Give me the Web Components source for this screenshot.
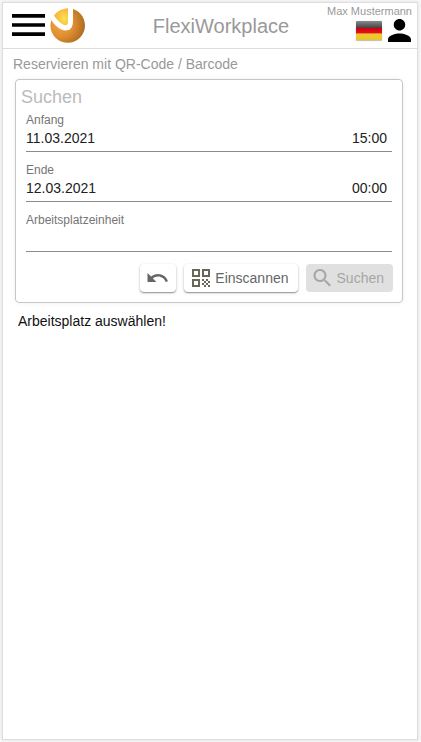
<!DOCTYPE html>
<html lang="de"><head><meta charset="utf-8"><title>FlexiWorkplace</title>
<style>
html,body{margin:0;height:100%}
body{background:#f7f7f7;font-family:"Liberation Sans",Arial,sans-serif}
</style></head><body>
<flexi-app></flexi-app>
<script>
const define=(name,html)=>customElements.define(name,class extends HTMLElement{
  constructor(){super();this.attachShadow({mode:'open'}).innerHTML=html;}
});
define('flexi-logo',`<style>:host{display:block;width:36px;height:36px}svg{display:block}</style>
<svg width="36" height="36" viewBox="0 0 36 36"><defs>
<radialGradient id="g" cx=".3" cy=".45" r=".75"><stop offset="0" stop-color="#f8a540"/><stop offset=".5" stop-color="#dd8e30"/><stop offset="1" stop-color="#a8671f"/></radialGradient>
<radialGradient id="y" cx=".72" cy=".6" r=".85"><stop offset="0" stop-color="#fde050"/><stop offset="1" stop-color="#f3a733"/></radialGradient></defs>
<circle cx="17.700" cy="17.500" r="17.300" fill="url(#g)"/>
<path d="M0 0H23V13C23 19.500 20 22.800 15.500 22.500C10 22 4.500 17.500 1 11.500L0 12Z" fill="#fff"/>
<path d="M4 7.500C7.500 3 12 .5 18 .2V13.500C18 17.500 15.500 18.200 12.500 16.200C9 14 6.200 11 4 7.500Z" fill="url(#y)"/>
</svg>`);
define('german-flag',`<style>:host{display:block;width:26px;height:20px;border-radius:1px;border-bottom:1px solid #c9c3b0;box-sizing:border-box;background:linear-gradient(#8a8a8a 0,#484848 34%,#d0000c 37%,#e3121b 64%,#eccb30 67%,#e8c42c 100%);box-shadow:0 0 1px #aaa}</style>`);
define('app-header',`<style>:host{display:grid;grid-template-columns:84px 1fr 84px;height:45px;border-bottom:1px solid #ddd;color:#999}
.left{display:flex;padding:5px 0 0 9px;gap:5px}.menu{padding-top:6px;display:block}
h1{font-size:20px;font-weight:400;line-height:24px;margin:11px 0 0 22px;text-align:center;white-space:nowrap}
.right{display:flex;flex-direction:column;align-items:flex-end;padding:2px 5px 0 0}.user{font-size:11px;line-height:13px;white-space:nowrap}
.icons{display:flex;gap:6px;margin:0 1px 0 0}german-flag{margin-top:3px}svg{display:block}.person{margin-top:1px}</style>
<div class="left"><svg class="menu" width="33" height="22" viewBox="3 6 18 12"><path d="M3 18h18v-2H3v2zm0-5h18v-2H3v2zm0-7v2h18V6H3z"/></svg><flexi-logo></flexi-logo></div>
<h1>FlexiWorkplace</h1>
<div class="right"><div class="user">Max Mustermann</div><div class="icons"><german-flag></german-flag><svg class="person" width="23" height="23" viewBox="4 4 16 16"><path d="M12 12c2.210 0 4-1.790 4-4s-1.790-4-4-4-4 1.790-4 4 1.790 4 4 4zm0 2c-2.670 0-8 1.340-8 4v2h16v-2c0-2.660-5.330-4-8-4z"/></svg></div></div>`);
define('form-field',`<style>:host{display:block;height:50px;box-sizing:border-box;color:#212121}
.box{height:38px;border-bottom:1px solid #8b8b8b}.label{font-size:12px;line-height:14px;color:#757575}
.values{display:flex;justify-content:space-between;font-size:14px;line-height:16px;padding:3px 5px 0 0}</style>
<div class="box"><div class="label"><slot name="label"></slot></div><div class="values"><slot></slot></div></div>`);
define('action-button',`<style>:host{display:flex;align-items:center;box-sizing:border-box;height:28px;border-radius:4px;background:#fff;color:#666;font-size:14px;line-height:16px;padding:0 9px 0 5px;gap:2px;box-shadow:0 1px 3px rgba(0,0,0,.22),0 1px 1px rgba(0,0,0,.28);white-space:nowrap}
:host([icon-only]){padding:0 6px}:host([disabled]){background:#e0e0e0;color:#a6a6a6;box-shadow:none}</style><slot name="icon"></slot><slot></slot>`);
define('search-panel',`<style>:host{display:block;box-sizing:border-box;width:388px;height:224px;margin:4px 0 0 12px;border:1px solid #c6c6c6;border-radius:4px;box-shadow:0 0 5px rgba(0,0,0,.06);padding:7px 10px 0}
h2{font-size:18px;font-weight:400;line-height:20px;color:#bbb;margin:0 0 6px -5px}
.actions{display:flex;justify-content:flex-end;gap:8px;margin:1px -1px 0 0}svg{display:block;flex:none;width:24px;height:24px;fill:currentColor}.qr{fill:#69665a}</style>
<h2>Suchen</h2>
<form-field><span slot="label">Anfang</span><span>11.03.2021</span><span>15:00</span></form-field>
<form-field><span slot="label">Ende</span><span>12.03.2021</span><span>00:00</span></form-field>
<form-field><span slot="label">Arbeitsplatzeinheit</span></form-field>
<div class="actions">
<action-button icon-only><svg slot="icon" viewBox="0.500 0 24 24"><path d="M12.500 8c-2.650 0-5.050.99-6.900 2.600L2 7v9h9l-3.620-3.620c1.390-1.160 3.160-1.880 5.120-1.880 3.540 0 6.550 2.310 7.600 5.500l2.370-.78C21.080 11.030 17.150 8 12.500 8z"/></svg></action-button>
<action-button><svg slot="icon" class="qr" viewBox="0 0 24 24"><path d="M3 11h8V3H3v8zm2-6h4v4H5V5zM3 21h8v-8H3v8zm2-6h4v4H5v-4zM13 3v8h8V3h-8zm6 6h-4V5h4v4zM19 19h2v2h-2zM13 13h2v2h-2zM15 15h2v2h-2zM13 17h2v2h-2zM15 19h2v2h-2zM17 17h2v2h-2zM17 13h2v2h-2zM19 15h2v2h-2z"/></svg>Einscannen</action-button>
<action-button disabled><svg slot="icon" viewBox="0.500 0 24 24"><path d="M15.500 14h-.79l-.28-.27C15.410 12.590 16 11.110 16 9.500 16 5.910 13.090 3 9.500 3S3 5.910 3 9.500 5.910 16 9.500 16c1.610 0 3.090-.59 4.230-1.570l.27.28v.79l5 4.990L20.490 19l-4.990-5zm-6 0C7.010 14 5 11.990 5 9.500S7.010 5 9.500 5 14 7.010 14 9.500 11.990 14 9.500 14z"/></svg>Suchen</action-button>
</div>`);
define('flexi-app',`<style>:host{display:block;box-sizing:border-box;width:421px;height:742px;padding:2px}
main{box-sizing:border-box;width:416px;height:738px;background:#fff;border:1px solid #ddd;box-shadow:0 0 3px rgba(0,0,0,.1)}
.crumb{font-size:14px;line-height:18px;color:#999;padding:6px 0 0 10px;height:20px}
.hint{font-size:14px;line-height:16px;color:#111;margin:10px 0 0 15px}</style>
<main><app-header></app-header><div class="crumb">Reservieren mit QR-Code / Barcode</div><search-panel></search-panel><div class="hint">Arbeitsplatz auswählen!</div></main>`);
</script></body></html>
